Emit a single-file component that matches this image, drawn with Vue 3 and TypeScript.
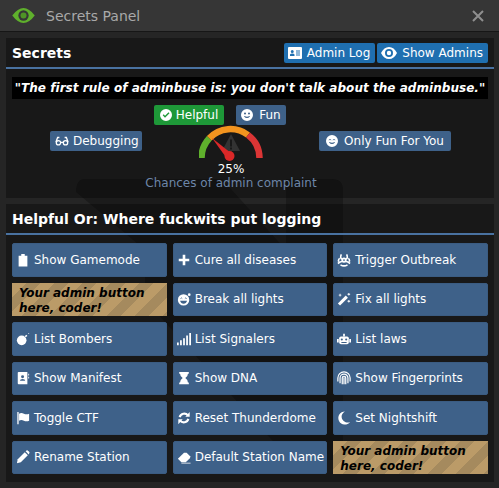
<script setup lang="ts">
type Cell = { label?: string; icon?: string; placeholder?: boolean }

const cells: Cell[] = [
  { label: 'Show Gamemode', icon: 'clipboard' },
  { label: 'Cure all diseases', icon: 'plus' },
  { label: 'Trigger Outbreak', icon: 'biohazard' },
  { placeholder: true },
  { label: 'Break all lights', icon: 'grin' },
  { label: 'Fix all lights', icon: 'wand' },
  { label: 'List Bombers', icon: 'bomb' },
  { label: 'List Signalers', icon: 'signal' },
  { label: 'List laws', icon: 'robot' },
  { label: 'Show Manifest', icon: 'book' },
  { label: 'Show DNA', icon: 'hourglass' },
  { label: 'Show Fingerprints', icon: 'fingerprint' },
  { label: 'Toggle CTF', icon: 'flag' },
  { label: 'Reset Thunderdome', icon: 'sync' },
  { label: 'Set Nightshift', icon: 'moon' },
  { label: 'Rename Station', icon: 'pencil' },
  { label: 'Default Station Name', icon: 'eraser' },
  { placeholder: true },
]
</script>

<template>
  <div class="window">
    <svg class="backdrop" viewBox="0 0 499 488" aria-hidden="true">
      <path d="M85 179H222L286 250V179H332Q343 179 343 190V460H290L145 300V250L76 192Q76 179 85 179Z" />
    </svg>
    <header class="titlebar">
      <svg class="title-eye" viewBox="0 0 24 16"><path d="M0 8Q6 0 12 0T24 8Q18 16 12 16T0 8Z" fill="#5fb02c" /><circle cx="12" cy="8" r="5.500" fill="#363636" /><circle cx="12" cy="8" r="3.200" fill="#4e9426" /></svg>
      <span class="title-text">Secrets Panel</span>
      <svg class="title-close" viewBox="0 0 12 12"><path d="M1 1 11 11M11 1 1 11" stroke="#8f8f8f" stroke-width="2" fill="none" /></svg>
    </header>

    <main class="content">
      <section class="panel panel--top">
        <div class="panel-head">
          <h2>Secrets</h2>
          <div class="head-buttons">
            <button class="btn btn--log">
              <svg viewBox="0 0 14 12" class="ic ic--card"><path fill-rule="evenodd" d="M1 0H13Q14 0 14 1V11Q14 12 13 12H1Q0 12 0 11V1Q0 0 1 0ZM2 7.500V9H6.500V7.500Q6 6.500 4.250 6.500T2 7.500ZM4.250 6A1.500 1.500 0 1 0 4.250 3 1.500 1.500 0 0 0 4.250 6ZM8 3.500V4.500H12V3.500ZM8 5.500V6.500H12V5.500ZM8 7.500V8.500H12V7.500Z" fill="#fff" /></svg>
              Admin Log
            </button>
            <button class="btn btn--log">
              <svg viewBox="0 0 16 12" class="ic ic--wide"><path fill-rule="evenodd" d="M0 6Q3 0 8 0T16 6Q13 12 8 12T0 6ZM8 10A4 4 0 1 0 8 2 4 4 0 0 0 8 10ZM8 8.200A2.200 2.200 0 1 0 8 3.800 2.200 2.200 0 0 0 8 8.200Z" fill="#fff" /></svg>
              Show Admins
            </button>
          </div>
        </div>
        <div class="quote">"The first rule of adminbuse is: you don't talk about the adminbuse."</div>

        <div class="modes-top">
          <button class="btn btn--helpful">
            <svg viewBox="0 0 12 12" class="ic"><path fill-rule="evenodd" d="M6 0A6 6 0 1 1 6 12 6 6 0 0 1 6 0ZM2.700 6.200 5 8.700 9.500 4.200 8.500 3.200 5 6.700 3.700 5.200Z" fill="#fff" /></svg>
            Helpful
          </button>
          <button class="btn btn--fun">
            <svg viewBox="0 0 12 12" class="ic"><path fill-rule="evenodd" d="M6 0A6 6 0 1 1 6 12 6 6 0 0 1 6 0ZM4 3.500A1 1 0 1 0 4 5.500 1 1 0 0 0 4 3.500ZM8 3.500A1 1 0 1 0 8 5.500 1 1 0 0 0 8 3.500ZM3 7.500Q6 10.500 9 7.500L8.500 7Q6 8.500 3.500 7Z" fill="#fff" /></svg>
            Fun
          </button>
        </div>

        <div class="modes-mid">
          <button class="btn mode-left">
            <svg viewBox="0 0 16 12" class="ic ic--glasses"><path fill="none" stroke="#fff" stroke-width="1.500" d="M1 7.500 3 2H5M15 7.500 13 2H11M6.500 8A2.500 2.500 0 1 1 1.500 8 2.500 2.500 0 0 1 6.500 8ZM14.500 8A2.500 2.500 0 1 1 9.500 8 2.500 2.500 0 0 1 14.500 8ZM6.500 7.500H9.500" /></svg>
            Debugging
          </button>
          <div class="gauge-wrap">
            <svg class="gauge" viewBox="0 0 64 36">
              <path class="gauge-warn" d="M32 9 41 26H23Z" />
              <path d="M31 14.500V21.500H33V14.500ZM31 22.500V24.500H33V22.500Z" fill="#191919" />
              <path d="M2.500 33A29 29 0 0 1 10.300 13.200" class="arc" stroke="#5fb02c" />
              <path d="M10.300 13.200A29 29 0 0 1 49 10" class="arc" stroke="#f2941f" />
              <path d="M49 10A29 29 0 0 1 60.500 33" class="arc" stroke="#db3535" />
              <path d="M13 13 32.500 28.500 27.500 33Z" fill="#db2828" />
              <circle cx="30.500" cy="31" r="5" fill="#db2828" />
            </svg>
            <div class="gauge-value">25%</div>
          </div>
          <button class="btn mode-right">
            <svg viewBox="0 0 12 12" class="ic"><path fill-rule="evenodd" d="M6 0A6 6 0 1 1 6 12 6 6 0 0 1 6 0ZM2.500 5.200H3.300Q4 4 4.700 5.200H5.500Q4 2.800 2.500 5.200ZM6.500 5.200H7.300Q8 4 8.700 5.200H9.500Q8 2.800 6.500 5.200ZM3 7.500Q6 10.500 9 7.500L8.500 7Q6 8.500 3.500 7Z" fill="#fff" /></svg>
            Only Fun For You
          </button>
        </div>
        <div class="gauge-label">Chances of admin complaint</div>
      </section>

      <section class="panel panel--grid">
        <div class="panel-head panel-head--plain">
          <h2>Helpful Or: Where fuckwits put logging</h2>
        </div>
        <div class="grid">
          <template v-for="(cell, i) in cells" :key="i">
            <div v-if="cell.placeholder" class="stub">Your admin button here, coder!</div>
            <button v-else class="btn btn--cell">
              <svg class="cell-icon" viewBox="0 0 16 16">
                <g v-if="cell.icon === 'clipboard'" fill="#fff"><path d="M3 3H6V1H10V3H13V15.500H3Z" /></g>
                <path v-else-if="cell.icon === 'plus'" fill="#fff" d="M6.500 2H9.500V6.500H14V9.500H9.500V14H6.500V9.500H2V6.500H6.500Z" />
                <g v-else-if="cell.icon === 'biohazard'" fill="none" stroke="#fff"><circle cx="8" cy="8" r="2" stroke-width="2" /><path stroke-width="1.800" d="M5 1.500Q3 6 6 7M11 1.500Q13 6 10 7M1 12Q5 9 6.500 10M15 12Q11 9 9.500 10M4 13.500Q8 16 12 13.500M3 6Q1 8 2 10M13 6Q15 8 14 10" /></g>
                <g v-else-if="cell.icon === 'grin'"><circle cx="7.500" cy="9" r="6.500" fill="#fff" /><path d="M3.500 10H11.500Q10.500 13.500 7.500 13.500T3.500 10Z" fill="#3e6189" /><path d="M4 7.500Q5 6 6 7.500M9 7.500Q10 6 11 7.500" stroke="#3e6189" fill="none" /><circle cx="14" cy="3" r="1.500" fill="#fff" /></g>
                <g v-else-if="cell.icon === 'wand'" fill="#fff"><path d="M1 13 10 4 12.500 6.500 3.500 15.500Z" /><path d="M3 2H4V3H5V4H4V5H3V4H2V3H3ZM13 1H14V2H15V3H14V4H13V3H12V2H13ZM13 9H14V10H15V11H14V12H13V11H12V10H13Z" /></g>
                <g v-else-if="cell.icon === 'bomb'" fill="#fff"><circle cx="6.500" cy="9.500" r="5.500" /><path d="M10 4.500 12 3 13 4.500 11 6Z" /><path d="M14 1H15V2H14Z" /></g>
                <path v-else-if="cell.icon === 'signal'" fill="#fff" d="M0 12H2V15H0ZM3.500 9.500H5.500V15H3.500ZM7 7H9V15H7ZM10.500 4H12.500V15H10.500ZM14 1H16V15H14Z" />
                <g v-else-if="cell.icon === 'robot'"><rect x="2.500" y="5" width="11" height="9" rx="2" fill="#fff" /><path d="M0 8H2V12H0ZM14 8H16V12H14ZM7 2H9V5H7Z" fill="#fff" /><circle cx="5.500" cy="8.500" r="1.200" fill="#3e6189" /><circle cx="10.500" cy="8.500" r="1.200" fill="#3e6189" /><path d="M5 11.500H11V12.500H5Z" fill="#3e6189" /></g>
                <g v-else-if="cell.icon === 'book'"><path d="M3 1H13V15H3Q2 15 2 14V2Q2 1 3 1ZM14 3H15V5H14ZM14 6.500H15V8.500H14Z" fill="#fff" /><circle cx="7.500" cy="6.500" r="1.700" fill="#3e6189" /><path d="M4.500 11Q4.500 9 7.500 9T10.500 11Z" fill="#3e6189" /></g>
                <path v-else-if="cell.icon === 'hourglass'" fill="#fff" d="M2.500 1H13.500V3H12.500Q12.500 6 9.500 8 12.500 10 12.500 13H13.500V15H2.500V13H3.500Q3.500 10 6.500 8 3.500 6 3.500 3H2.500Z" />
                <g v-else-if="cell.icon === 'fingerprint'" fill="none" stroke="#fff" stroke-width="1.400"><path d="M1 12V8A7 7 0 0 1 15 8V12M3.500 14V8A4.500 4.500 0 0 1 12.500 8V14M6 15V8A2 2 0 0 1 10 8V15M8 7V15" /></g>
                <path v-else-if="cell.icon === 'flag'" fill="#fff" d="M1.500 1H3V15H1.500ZM3.500 3Q6 1.500 9 3T15 3V11Q12 12.500 9 11T3.500 11Z" />
                <g v-else-if="cell.icon === 'sync'" fill="none" stroke="#fff" stroke-width="2.400"><path d="M3 7A5.500 5.500 0 0 1 12.500 5M13 9A5.500 5.500 0 0 1 3.500 11" /><path d="M14.500 1V6.500H9.500M1.500 15V9.500H6.500" stroke="none" fill="#fff" /></g>
                <path v-else-if="cell.icon === 'moon'" fill="#fff" d="M9 .5A7.500 7.500 0 1 0 15 12.500 6.500 6.500 0 0 1 9 .5Z" />
                <g v-else-if="cell.icon === 'pencil'" fill="#fff"><path d="M1 15 2 10.500 10 2.500 13.500 6 5.500 14Z" /><path d="M11 1.500 12 .5Q13 0 14 1L15 2Q16 3 15 4L14.500 5Z" /></g>
                <g v-else-if="cell.icon === 'eraser'" fill="#fff"><path d="M1 10 8 3H11L15 7V9L10 14H5Z" /><path d="M5 14.500H15.500V15.500H5Z" /></g>
              </svg>
              <span>{{ cell.label }}</span>
            </button>
          </template>
        </div>
      </section>
    </main>
  </div>
</template>

<style>
html,
body {
  margin: 0;
  background: #252525;
}
</style>

<style scoped>
.window {
  position: relative;
  width: 499px;
  height: 488px;
  overflow: hidden;
  background: #252525;
  font-family: 'DejaVu Sans', Verdana, sans-serif;
  font-size: 12px;
  color: #fff;
}

.backdrop {
  position: absolute;
  inset: 0;
  width: 499px;
  height: 488px;
}

.backdrop path {
  fill: #1b1b1b;
}

.titlebar {
  position: relative;
  display: flex;
  align-items: center;
  height: 31px;
  padding: 0 15px 0 12px;
  background: #363636;
  border-bottom: 1px solid #161616;
}

.title-eye {
  width: 23px;
  height: 15px;
  flex: none;
}

.title-text {
  margin-left: 11px;
  font-size: 14px;
  color: #a9a9a9;
}

.title-close {
  margin-left: auto;
  width: 12px;
  height: 12px;
}

.content {
  position: relative;
  padding: 6px 5px 6px 6px;
}

.panel {
  background: rgba(0, 0, 0, 0.33);
  box-sizing: border-box;
}

.panel--top {
  height: 160px;
  margin-bottom: 6px;
}

.panel--grid {
  height: 278px;
}

.panel-head {
  display: flex;
  align-items: center;
  justify-content: space-between;
  height: 29px;
  padding: 0 6px;
  border-bottom: 2px solid #4972a1;
}

.panel-head h2 {
  margin: 0;
  font-size: 14px;
  font-weight: 700;
}

.head-buttons {
  display: flex;
  gap: 2px;
}

.btn {
  display: inline-flex;
  align-items: center;
  gap: 4px;
  height: 20px;
  padding: 0 5px;
  border: 0;
  border-radius: 2px;
  background: #3e6189;
  color: #fff;
  font: inherit;
  white-space: nowrap;
}

.btn--log {
  background: #1f6fb0;
  padding: 0 5px 0 4px;
  gap: 5px;
}

.btn--helpful {
  background: #1e9838;
  width: 70px;
  justify-content: center;
  padding: 0;
}

.btn--fun {
  width: 50px;
  justify-content: center;
  padding: 0;
  gap: 6px;
}

.ic {
  width: 12px;
  height: 12px;
  flex: none;
}

.ic--card {
  width: 14px;
}

.ic--wide {
  width: 16px;
}

.ic--glasses {
  width: 14px;
}

.quote {
  margin: 8px 6px 6px;
  height: 22px;
  line-height: 22px;
  background: #000;
  text-align: center;
  font-weight: 700;
  font-style: italic;
  font-size: 12px;
  letter-spacing: 0.04px;
  white-space: nowrap;
}

.modes-top {
  display: flex;
  justify-content: center;
  gap: 12px;
  padding-right: 60px;
}

.modes-mid {
  display: flex;
  align-items: flex-start;
  height: 35px;
}

.mode-left {
  margin: 6px 0 0 44px;
  width: 92px;
}

.mode-right {
  margin: 6px 0 0 56px;
  width: 132px;
  gap: 6px;
  justify-content: center;
  padding: 0;
}

.gauge-wrap {
  position: relative;
  width: 64px;
  margin-left: 57px;
}

.gauge {
  display: block;
  width: 64px;
  height: 36px;
}

.gauge-warn {
  fill: #333;
}

.arc {
  fill: none;
  stroke-width: 6.500;
}

.gauge-value {
  margin-top: 1px;
  text-align: center;
  line-height: 14px;
}

.gauge-label {
  margin-top: 16px;
  padding-right: 38px;
  text-align: center;
  color: #6d86a8;
}

.grid {
  display: grid;
  grid-template-columns: repeat(3, 1fr);
  grid-auto-rows: 33.500px;
  gap: 6px;
  padding: 8px 6px 0;
}

.btn--cell {
  width: 100%;
  height: 100%;
  padding: 0 0 0 3px;
  gap: 4px;
  border: 1px solid #3b5c82;
  box-sizing: border-box;
  text-align: left;
  overflow: hidden;
}

.cell-icon {
  width: 14px;
  height: 14px;
  flex: none;
}

.stub {
  padding: 3px 7px 0;
  height: 100%;
  box-sizing: border-box;
  background: repeating-linear-gradient(135deg, #bb9b68 0 10px, #a58a5e 10px 20px);
  color: #000;
  font-weight: 700;
  font-style: italic;
  font-size: 12px;
  line-height: 15px;
}
</style>
